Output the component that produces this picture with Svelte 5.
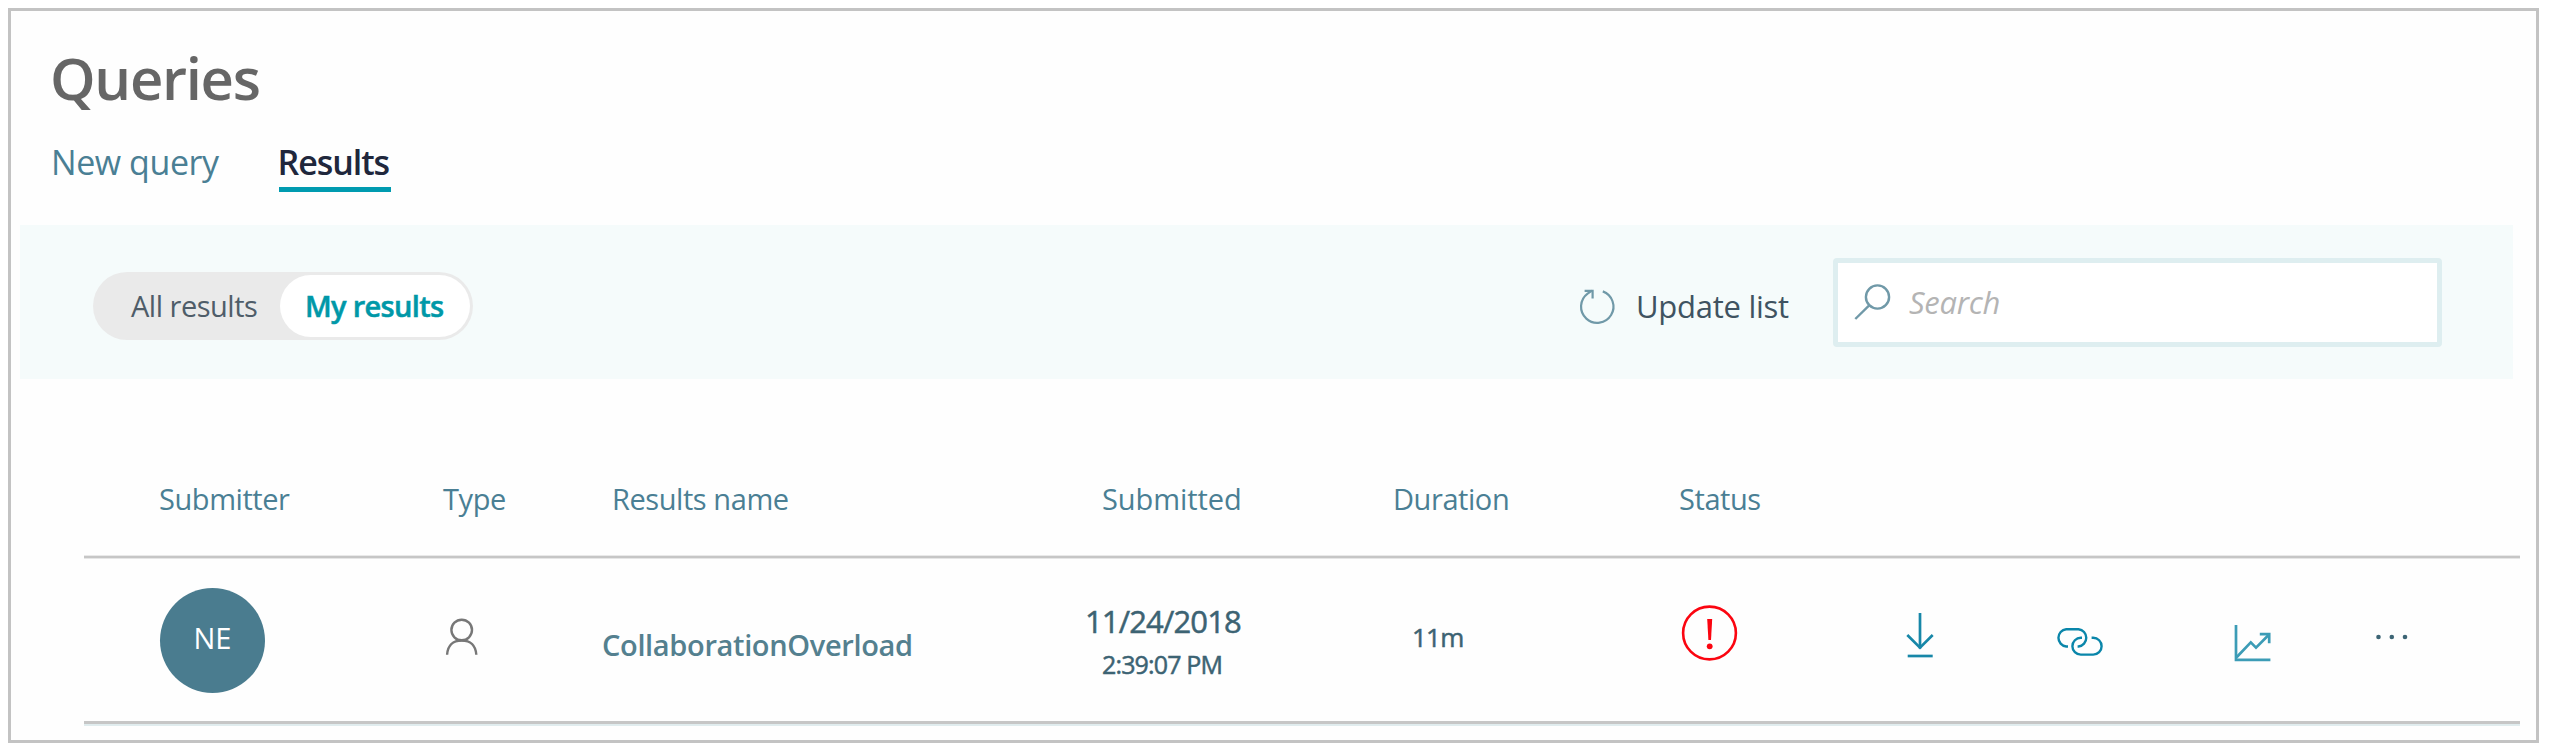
<script>
  const tabs = [
    { label: 'New query', active: false },
    { label: 'Results', active: true }
  ];
  const columns = [
    ['Submitter', 'submitter'],
    ['Type', 'type'],
    ['Results name', 'name'],
    ['Submitted', 'submitted'],
    ['Duration', 'duration'],
    ['Status', 'status']
  ];
  const rows = [
    { initials: 'NE', name: 'CollaborationOverload', date: '11/24/2018', time: '2:39:07 PM', duration: '11m' }
  ];
</script>

<main class="frame">
  <h1>Queries</h1>
  <nav class="tabs">
    {#each tabs as tab}
      <div class="tab" class:active={tab.active}>{tab.label}</div>
    {/each}
  </nav>

  <section class="toolbar">
    <div class="toggle">
      <span class="option">All results</span>
      <span class="option selected">My results</span>
    </div>
    <div class="update">
      <svg width="40" height="40" viewBox="0 0 40 40" fill="none" stroke="#7099a8" stroke-width="2.2">
        <path d="M24.8 5.4A16.2 16.2 0 1 1 9.6 7.6L14 4.6" />
        <path d="M6.6 4.8H14.6V12.4" />
      </svg>
      <span>Update list</span>
    </div>
    <div class="search">
      <svg width="38" height="38" viewBox="0 0 38 38" fill="none" stroke="#7099a8" stroke-width="2.4">
        <circle cx="24.5" cy="14" r="11.6" />
        <path d="M16.2 22.3L2.3 36" />
      </svg>
      <span>Search</span>
    </div>
  </section>

  <section class="table">
    <div class="grid head">
      {#each columns as [label, key]}
        <div class="th {key}">{label}</div>
      {/each}
    </div>
    {#each rows as row}
      <div class="grid row">
        <div class="submitter"><div class="avatar">{row.initials}</div></div>
        <div class="type">
          <svg width="36" height="40" viewBox="0 0 36 40" fill="none" stroke="#777" stroke-width="2.4">
            <circle cx="17.7" cy="12" r="10.3" />
            <path d="M3.1 36.8C3.6 27.6 9 22.5 17.7 22.5S31.8 27.6 32.3 36.8" />
          </svg>
        </div>
        <div class="name">{row.name}</div>
        <div class="submitted">
          <div class="date">{row.date}</div>
          <div class="time">{row.time}</div>
        </div>
        <div class="duration">{row.duration}</div>
        <div class="status">
          <svg width="58" height="58" viewBox="0 0 58 58">
            <circle cx="28.5" cy="29" r="26.4" fill="none" stroke="#fb0510" stroke-width="2.6" />
            <path d="M26.2 15H31.2L30 36H27.4Z" fill="#fb0510" />
            <circle cx="28.7" cy="42.3" r="2.9" fill="#fb0510" />
          </svg>
        </div>
        <div class="download">
          <svg width="30" height="48" viewBox="0 0 30 48" fill="none" stroke="#1787a8" stroke-width="2.7">
            <path d="M15 2V37.5" />
            <path d="M2.3 24L15 36.7L27.7 24" />
            <path d="M2.7 45H27.7" />
          </svg>
        </div>
        <div class="link">
          <svg width="48" height="32" viewBox="0 0 48 32" fill="none" stroke="#0a86aa" stroke-width="2.4">
            <path d="M12 20.5H10.2A8.7 8.7 0 0 1 10.2 3.2H22.5A8.7 8.7 0 0 1 22.5 20.5H21.6" />
            <path d="M26 11.8H24.8A8.4 8.4 0 0 0 24.8 28.6H37.2A8.4 8.4 0 0 0 37.2 11.8H35.6" />
          </svg>
        </div>
        <div class="chart">
          <svg width="38" height="38" viewBox="0 0 38 38" fill="none" stroke="#3c9cb6" stroke-width="2.7">
            <path d="M2 1V35.8H36.4" />
            <path d="M2.6 33.2L16.8 18.4L22 23.6L34.6 11" />
            <path d="M25.8 10.2H35.2V19.2" />
          </svg>
        </div>
        <div class="more">
          <svg width="34" height="10" viewBox="0 0 34 10" fill="#3d6575">
            <circle cx="4.5" cy="5" r="2.3" />
            <circle cx="17.8" cy="5" r="2.3" />
            <circle cx="31" cy="5" r="2.3" />
          </svg>
        </div>
      </div>
    {/each}
  </section>
</main>

<style>
  :global(body) {
    background: #fff;
  }
  .frame {
    box-sizing: border-box;
    width: 2531px;
    height: 735px;
    margin: 8px 0 0 8px;
    border: 3px solid #c3c3c3;
    background: #fefefe;
    font-family: 'Open Sans', 'Noto Sans', sans-serif;
    white-space: nowrap;
    display: flex;
    flex-direction: column;
  }
  svg {
    display: block;
  }
  h1 {
    margin: 27px 0 0 39px;
    font-size: 58px;
    line-height: 80px;
    font-weight: 600;
    letter-spacing: -1.3px;
    color: #666;
  }
  .tabs {
    display: flex;
    gap: 60px;
    margin: 22px 0 0 40px;
  }
  .tab {
    box-sizing: border-box;
    height: 52px;
    font-size: 34px;
    line-height: 45px;
    letter-spacing: -0.44px;
    color: #4a7f94;
  }
  .tab.active {
    width: 112px;
    border-bottom: 5px solid #009bb0;
    font-weight: 600;
    letter-spacing: -1.06px;
    color: #20273c;
    text-indent: -1px;
  }
  .toolbar {
    box-sizing: border-box;
    display: flex;
    align-items: center;
    width: 2493px;
    height: 154px;
    margin: 33px 0 0 9px;
    padding: 0 71px 0 73px;
    background: #f5fbfb;
  }
  .toggle {
    box-sizing: border-box;
    display: flex;
    width: 380px;
    height: 68px;
    margin-top: 7px;
    padding: 3px 3px 3px 38px;
    border-radius: 34px;
    background: #eaeaea;
  }
  .option {
    font-size: 29px;
    line-height: 62px;
    letter-spacing: -0.49px;
    color: #4f5d69;
    width: 149px;
  }
  .option.selected {
    box-sizing: border-box;
    width: 190px;
    padding-left: 25px;
    border-radius: 31px;
    background: #fff;
    font-weight: 600;
    letter-spacing: -0.68px;
    -webkit-text-stroke: 0.5px currentColor;
    color: #0098a8;
  }
  .update {
    display: flex;
    align-items: center;
    gap: 18px;
    margin: 7px 0 0 auto;
    width: 255px;
    font-size: 31px;
    line-height: 40px;
    letter-spacing: -0.27px;
    color: #3f5361;
  }
  .search {
    box-sizing: border-box;
    display: flex;
    align-items: center;
    gap: 18px;
    width: 609px;
    height: 89px;
    padding-left: 15px;
    border: 5px solid #deeef0;
    border-radius: 4px;
    background: #fff;
    font-size: 31px;
    line-height: 40px;
    font-style: italic;
    letter-spacing: -0.3px;
    color: #b4b4b4;
  }
  .table {
    width: 2436px;
    margin-left: 73px;
  }
  .grid {
    display: grid;
    grid-template-columns: 284px 160px 460px 331px 287px 225px 149px 178px 142px 1fr;
    padding-left: 76px;
    align-items: start;
  }
  .head {
    height: 177px;
    border-bottom: 2px solid #c6c6c6;
    box-shadow: 0 1px #e6e6e6, inset 0 -1px #e9e9e9;
    color: #4a7f94;
    font-size: 29px;
    line-height: 40px;
    letter-spacing: -0.43px;
  }
  .th {
    margin-top: 100px;
  }
  .th.submitter,
  .th.type {
    margin-left: -1px;
  }
  .th.name {
    padding-left: 8px;
  }
  .th.submitted {
    padding-left: 38px;
    letter-spacing: -0.07px;
  }
  .th.duration {
    margin-left: -2px;
  }
  .th.status {
    margin-left: -3px;
  }
  .row {
    box-sizing: content-box;
    height: 163px;
    border-bottom: 3px solid #c6c6c6;
    box-shadow: 0 2px #e0ecee;
  }
  .avatar {
    width: 105px;
    height: 105px;
    margin-top: 30px;
    border-radius: 50%;
    background: #4a7c8f;
    color: #fff;
    font-size: 29px;
    line-height: 100px;
    text-align: center;
  }
  .row .type {
    margin-top: 60px;
  }
  .row .name {
    margin: 67px 0 0 -2px;
    font-size: 29px;
    line-height: 40px;
    font-weight: 600;
    letter-spacing: -0.35px;
    color: #54808f;
  }
  .row .submitted,
  .row .duration {
    color: #3c6373;
    -webkit-text-stroke: 0.5px currentColor;
  }
  .date {
    margin: 43px 0 0 21px;
    font-size: 31px;
    line-height: 40px;
    letter-spacing: -0.87px;
  }
  .time {
    margin: 5px 0 0 38px;
    font-size: 25px;
    line-height: 36px;
    letter-spacing: -0.85px;
  }
  .row .duration {
    margin: 59px 0 0 17px;
    font-size: 26px;
    line-height: 40px;
    letter-spacing: -0.8px;
  }
  .row .status {
    margin: 46px 0 0 -1px;
  }
  .download {
    margin: 53px 0 0 -2px;
  }
  .link {
    margin-top: 68px;
  }
  .chart {
    margin-top: 66px;
  }
  .more {
    margin: 74px 0 0 -2px;
  }
</style>
